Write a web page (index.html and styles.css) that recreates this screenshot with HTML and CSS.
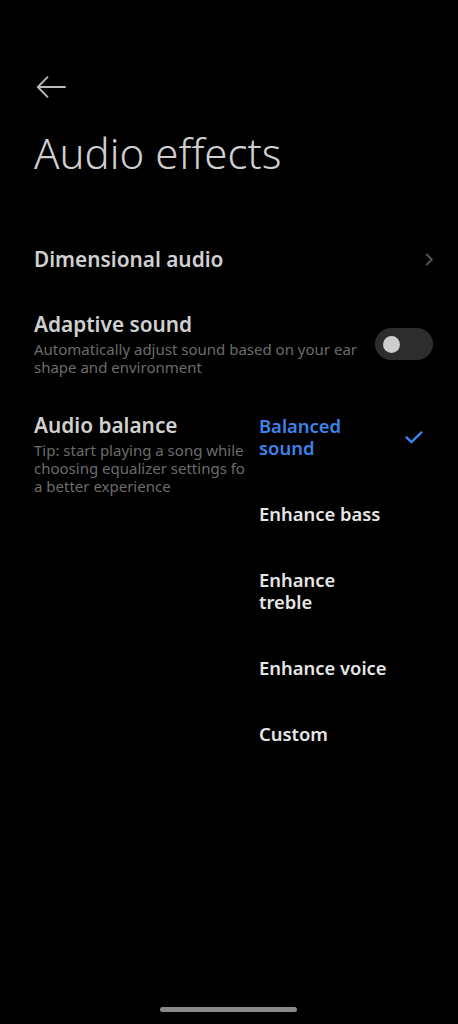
FILE: index.html
```html
<!DOCTYPE html>
<html lang="en">
<head>
<meta charset="utf-8">
<title>Audio effects</title>
<link rel="stylesheet" href="styles.css">
</head>
<body>
<div class="screen">
  <header class="header">
    <svg class="back" width="30" height="22" viewBox="0 0 30 22" aria-hidden="true">
      <path d="M29 11H1.8M11.5 1.2L1.8 11L11.5 20.8" fill="none" stroke="#bdbdbd" stroke-width="1.8" stroke-linecap="round" stroke-linejoin="round"/>
    </svg>
    <h1 class="title">Audio effects</h1>
  </header>

  <div class="list">
    <div class="row row-nav">
      <div class="row-text"><div class="row-title">Dimensional audio</div></div>
      <svg class="chev" width="9" height="13" viewBox="0 0 9 13" aria-hidden="true">
        <path d="M1.8 1.5L6.8 6.5L1.8 11.5" fill="none" stroke="#565656" stroke-width="1.8" stroke-linecap="round" stroke-linejoin="round"/>
      </svg>
    </div>

    <div class="row row-toggle">
      <div class="row-text">
        <div class="row-title">Adaptive sound</div>
        <div class="row-sub">Automatically adjust sound based on your ear shape and environment</div>
      </div>
      <div class="toggle"><div class="knob"></div></div>
    </div>

    <div class="row row-balance">
      <div class="row-text">
        <div class="row-title">Audio balance</div>
        <div class="row-sub">Tip: start playing a song while<br>choosing equalizer settings for<br>a better experience</div>
      </div>
    </div>
  </div>

  <div class="menu">
    <div class="menu-item selected">
      <span class="menu-label">Balanced<br>sound</span>
      <svg class="check" width="18" height="13" viewBox="0 0 18 13" aria-hidden="true">
        <path d="M1.6 6.4L6.4 11.2L16.4 1.4" fill="none" stroke="#3f82ea" stroke-width="2.4" stroke-linecap="round" stroke-linejoin="round"/>
      </svg>
    </div>
    <div class="menu-item"><span class="menu-label">Enhance bass</span></div>
    <div class="menu-item"><span class="menu-label">Enhance<br>treble</span></div>
    <div class="menu-item"><span class="menu-label">Enhance voice</span></div>
    <div class="menu-item"><span class="menu-label">Custom</span></div>
  </div>

  <div class="home-bar"></div>
</div>
</body>
</html>
```

FILE: styles.css
```css
* { box-sizing: border-box; }

html, body {
  margin: 0;
  padding: 0;
  background: #000;
}

body {
  font-family: "Noto Sans", "Open Sans", sans-serif;
  color: #d2d2d2;
}

.screen {
  position: relative;
  width: 458px;
  height: 1024px;
  overflow: hidden;
  background: #000;
}

.header {
  padding: 76px 0 0 36px;
}

.back {
  display: block;
}

.title {
  margin: 30px 0 0 -2px;
  font-size: 42px;
  font-weight: 300;
  line-height: 50px;
  color: #cfcfcf;
  letter-spacing: 0;
}

.list {
  padding: 0 25px 0 34px;
}

.row {
  display: flex;
  align-items: center;
  gap: 10px;
}

.row-text {
  flex: 1;
  min-width: 0;
}

.row-title {
  font-size: 20.8px;
  font-weight: 600;
  line-height: 24px;
  color: #d0d0d0;
}

.row-sub {
  margin-top: 4px;
  font-size: 15px;
  line-height: 18px;
  color: #6c6c6c;
}

.row-nav {
  margin-top: 69px;
}

.chev {
  display: block;
  margin-right: -1px;
}

.row-toggle {
  margin-top: 41px;
}

.toggle {
  width: 58px;
  height: 32px;
  border-radius: 16px;
  background: #2d2d2d;
  display: flex;
  align-items: center;
  padding-left: 8px;
  flex: none;
}

.knob {
  width: 17px;
  height: 17px;
  border-radius: 50%;
  background: #cdcdcd;
}

.row-balance {
  margin-top: 37px;
}

.menu {
  position: absolute;
  left: 245px;
  top: 393px;
  right: 0;
  background: #000;
}

.menu-item {
  display: flex;
  align-items: center;
  justify-content: space-between;
  padding: 22px 35px 22px 14px;
}

.menu-label {
  font-size: 18.4px;
  font-weight: 600;
  line-height: 22px;
  color: #e6e6e6;
  white-space: nowrap;
}

.menu-item.selected .menu-label {
  color: #3f82ea;
}

.check {
  display: block;
}

.home-bar {
  position: absolute;
  left: 160px;
  top: 1007px;
  width: 137px;
  height: 5px;
  border-radius: 3px;
  background: #8a8a8a;
}
```
